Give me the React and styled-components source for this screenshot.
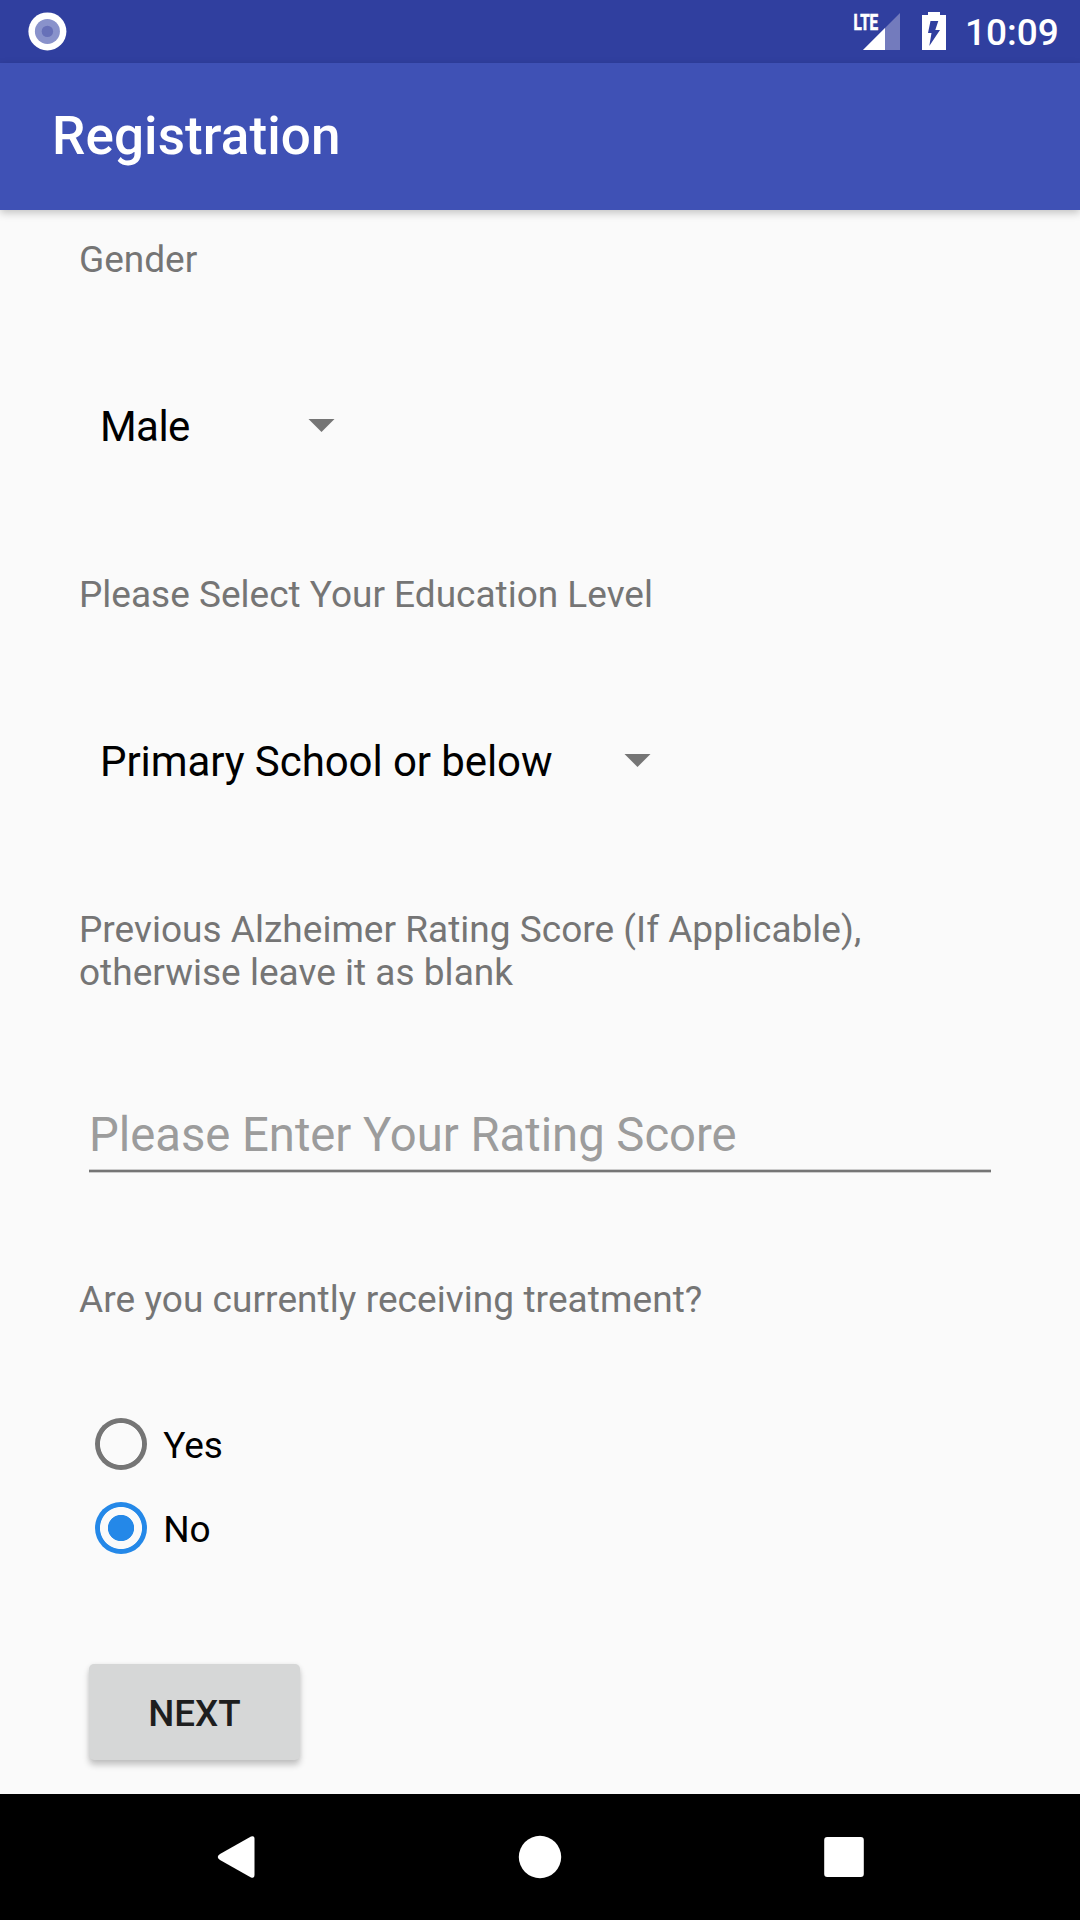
import React, { useState } from "react";
import styled, { createGlobalStyle } from "styled-components";

const GlobalStyle = createGlobalStyle`
  body { margin: 0; background: #fafafa; }
  * { box-sizing: border-box; }
`;

const Screen = styled.div`
  width: 1080px;
  height: 1920px;
  display: flex;
  flex-direction: column;
  overflow: hidden;
  background: #fafafa;
  font-family: Roboto, sans-serif;
`;

const StatusBar = styled.header`
  height: 63px;
  flex: none;
  display: flex;
  align-items: flex-start;
  justify-content: space-between;
  padding: 0 21px 0 26px;
  background: #303f9f;
`;

const StatusIcons = styled.div`
  display: flex;
  align-items: flex-start;
`;

const Icon = styled.svg`
  display: block;
  flex: none;
`;

const Clock = styled.span`
  width: 95px;
  padding: 11px 0 0 1px;
  color: #fff;
  font-size: 37px;
  font-weight: 500;
  line-height: 43px;
  white-space: nowrap;
`;

const AppBar = styled.div`
  height: 147px;
  flex: none;
  display: flex;
  align-items: center;
  padding: 0 0 2px 52px;
  background: #3f51b5;
  box-shadow: 0 3px 8px rgba(0, 0, 0, 0.22);
  z-index: 1;
`;

const Title = styled.h1`
  margin: 0;
  color: #fff;
  font-size: 53px;
  font-weight: 500;
  letter-spacing: 0.1px;
  line-height: 62px;
`;

const Form = styled.main`
  flex: 1;
  min-height: 0;
  display: flex;
  flex-direction: column;
  align-items: flex-start;
  padding: 28px 79px 0;
`;

const Label = styled.p`
  margin: 0;
  color: #757575;
  font-size: 37px;
  letter-spacing: ${(p) => p.$tracking || 0}px;
  line-height: 43px;
`;

const Select = styled.button`
  width: ${(p) => p.$width}px;
  height: 63px;
  margin: 113px 0 116px;
  padding: 0 11px 0 21px;
  display: flex;
  align-items: center;
  justify-content: space-between;
  border: 0;
  background: none;
  color: #000;
  font: 400 42px/49px Roboto, sans-serif;
  letter-spacing: ${(p) => p.$tracking}px;
  white-space: nowrap;
`;

const SelectText = styled.span`
  padding-top: 2px;
`;

const ScoreInput = styled.input`
  width: 902px;
  height: 72px;
  margin: 106px 0 106px 10px;
  padding: 0 0 1px;
  border: 0;
  border-bottom: 2px solid #757575;
  outline: 0;
  box-shadow: 0 1px #ccc, inset 0 -1px #ccc;
  background: none;
  font: 400 47.25px/56px Roboto, sans-serif;
  letter-spacing: -0.03px;
  &::placeholder {
    color: #9c9c9c;
    opacity: 1;
  }
`;

const RadioGroup = styled.div`
  display: flex;
  flex-direction: column;
  margin: 81px 0 94px 15.7px;
`;

const RadioRow = styled.label`
  height: 84px;
  display: flex;
  align-items: center;
  gap: 16px;
  color: #000;
  font-size: 37px;
  line-height: 43px;
`;

const RadioDot = styled.input`
  appearance: none;
  width: 52.5px;
  height: 52.5px;
  margin: 0;
  border-radius: 50%;
  background: ${(p) =>
    p.checked
      ? "radial-gradient(circle, #2488e8 12.7px, transparent 13.5px, transparent 20.6px, #2488e8 21.4px)"
      : "radial-gradient(circle, transparent 20.6px, #757575 21.4px)"};
`;

const RadioText = styled.span`
  padding-top: 3px;
`;

const NextButton = styled.button`
  width: 211px;
  height: 96px;
  margin-left: 10px;
  padding: 2px 0 0;
  border: 0;
  border-radius: 5px;
  background: #d6d7d7;
  color: #1e1e1e;
  box-shadow: 0 5px 6px rgba(0, 0, 0, 0.22), 0 0 4px rgba(0, 0, 0, 0.06);
  font: 500 36.75px/43px Roboto, sans-serif;
`;

const NavBar = styled.nav`
  height: 126px;
  flex: none;
  display: flex;
  align-items: center;
  justify-content: space-between;
  padding: 0 214px;
  background: #000;
`;

function RecordIcon() {
  return (
    <Icon width="44" height="63" viewBox="0 0 44 63">
      <circle cx="21.4" cy="31.4" r="19" fill="#fff" />
      <circle cx="21.4" cy="31.4" r="12.5" fill="#8992cb" />
      <circle cx="21.4" cy="31.4" r="5.7" fill="#6770b8" />
    </Icon>
  );
}

function SignalIcon() {
  return (
    <Icon width="52" height="63" viewBox="0 0 52 63">
      <path d="M50 13v37H13z" fill="#737bbd" />
      <path d="M35 28v22H13z" fill="#fff" />
      <text
        x="3.6"
        y="29.8"
        fill="#fff"
        stroke="#fff"
        strokeWidth="0.7"
        fontSize="22.5"
        fontWeight="700"
        textLength="24.6"
        lengthAdjust="spacingAndGlyphs"
      >
        LTE
      </text>
    </Icon>
  );
}

function BatteryIcon() {
  return (
    <Icon width="62" height="63" viewBox="0 0 62 63">
      <path d="M26 12h12v3h6v35H20V15h6z" fill="#fff" />
      <path d="M28.500 21h7.800l-3 9h4.700L27.300 46l2.200-13H26z" fill="#303f9f" />
    </Icon>
  );
}

function Caret() {
  return (
    <Icon width="28" height="13" viewBox="0 0 28 13">
      <path d="M0.500 0h26l-13 13z" fill="#757575" />
    </Icon>
  );
}

export default function App() {
  const [treated, setTreated] = useState("No");
  return (
    <>
      <GlobalStyle />
      <Screen>
        <StatusBar>
          <RecordIcon />
          <StatusIcons>
            <SignalIcon />
            <BatteryIcon />
            <Clock>10:09</Clock>
          </StatusIcons>
        </StatusBar>
        <AppBar>
          <Title>Registration</Title>
        </AppBar>
        <Form>
          <Label>Gender</Label>
          <Select $width={268} $tracking={-0.55}>
            <SelectText>Male</SelectText>
            <Caret />
          </Select>
          <Label>Please Select Your Education Level</Label>
          <Select $width={584} $tracking={-0.08}>
            <SelectText>Primary School or below</SelectText>
            <Caret />
          </Select>
          <Label $tracking={0.02}>
            Previous Alzheimer Rating Score (If Applicable),
            <br />
            otherwise leave it as blank
          </Label>
          <ScoreInput placeholder="Please Enter Your Rating Score" />
          <Label $tracking={0.07}>Are you currently receiving treatment?</Label>
          <RadioGroup>
            {["Yes", "No"].map((option) => (
              <RadioRow key={option}>
                <RadioDot
                  type="radio"
                  name="treatment"
                  checked={treated === option}
                  onChange={() => setTreated(option)}
                />
                <RadioText>{option}</RadioText>
              </RadioRow>
            ))}
          </RadioGroup>
          <NextButton>NEXT</NextButton>
        </Form>
        <NavBar>
          <Icon width="44" height="44" viewBox="0 0 44 44">
            <path d="M6 19 37 1.6Q40.500 0 40.500 4V40Q40.500 44 37 42.400L6 25Q1.500 22 6 19z" fill="#fff" />
          </Icon>
          <Icon width="44" height="44" viewBox="0 0 44 44">
            <circle cx="22" cy="22" r="21.200" fill="#fff" />
          </Icon>
          <Icon width="44" height="44" viewBox="0 0 44 44">
            <rect x="2.200" y="2" width="39.600" height="40" rx="3" fill="#fff" />
          </Icon>
        </NavBar>
      </Screen>
    </>
  );
}
